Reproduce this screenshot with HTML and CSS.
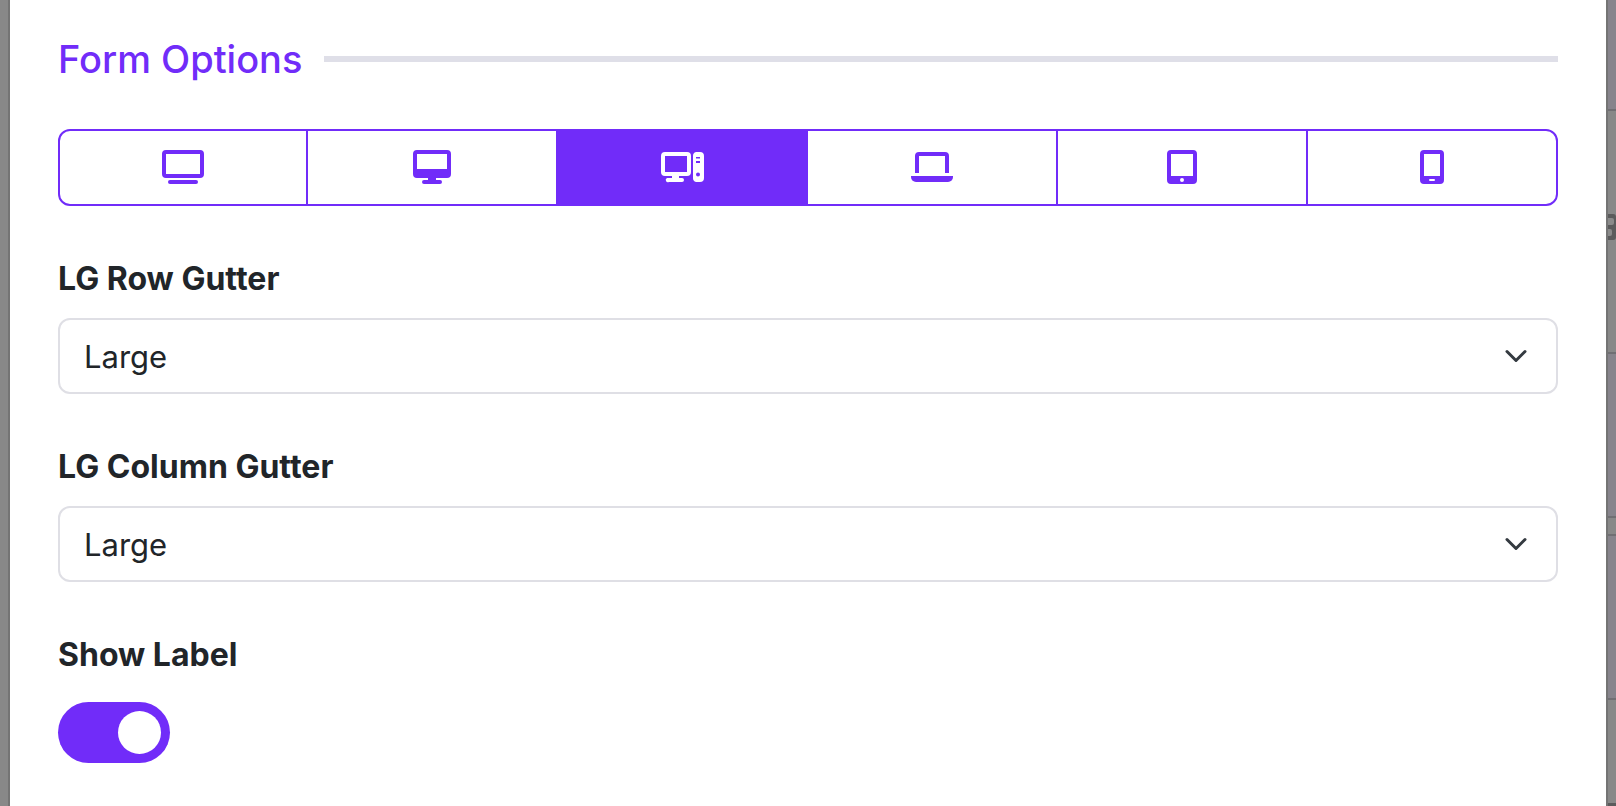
FILE: index.html
```
<!DOCTYPE html>
<html lang="en">
<head>
    <meta charset="utf-8">
    <meta name="viewport" content="width=device-width, initial-scale=1">
    <title>Form Options</title>
    <link rel="stylesheet" href="styles.css">
</head>
<body>
    <div class="page-left"></div>

    <main class="modal">
        <h2 class="section-title">Form Options</h2>

        <div class="btn-group" role="group" aria-label="Screen size">
            <button type="button" class="btn" aria-label="XXL">
                <svg class="icon" viewBox="0 0 48 41">
                    <rect x="5" y="5" width="38" height="24" rx="2" fill="none" stroke="currentColor" stroke-width="4"/>
                    <rect x="9" y="33" width="30" height="4" rx="2"/>
                </svg>
            </button>
            <button type="button" class="btn" aria-label="XL">
                <svg class="icon" viewBox="0 0 48 41">
                    <path fill-rule="evenodd" d="M9 3h30a4 4 0 0 1 4 4v20a4 4 0 0 1-4 4H28v2h4a2 2 0 0 1 0 4H16a2 2 0 0 1 0-4h4v-2H9a4 4 0 0 1-4-4V7a4 4 0 0 1 4-4zm0 4v15h30V7z"/>
                </svg>
            </button>
            <button type="button" class="btn active" aria-label="LG">
                <svg class="icon" viewBox="0 0 48 41">
                    <rect x="5" y="7" width="26" height="20" rx="2" fill="none" stroke="currentColor" stroke-width="4"/>
                    <path d="M14 28h7v3h3a2 2 0 0 1 0 4H11a2 2 0 0 1-2-4h5z"/>
                    <path fill-rule="evenodd" d="M38 5h4a4 4 0 0 1 4 4v22a4 4 0 0 1-4 4h-4a4 4 0 0 1-3-4V9a4 4 0 0 1 3-4zm0 5v1.500h4V10zm0 4v2h4v-2zm2 11.500a2 2 0 1 0 0 4 2 2 0 0 0 0-4z"/>
                </svg>
            </button>
            <button type="button" class="btn" aria-label="MD">
                <svg class="icon" viewBox="0 0 48 41">
                    <path d="M9 26V9a2 2 0 0 1 2-2h26a2 2 0 0 1 2 2v17" fill="none" stroke="currentColor" stroke-width="4"/>
                    <path d="M3 29h42v1a5 5 0 0 1-5 5H8a5 5 0 0 1-5-5z"/>
                </svg>
            </button>
            <button type="button" class="btn" aria-label="SM">
                <svg class="icon" viewBox="0 0 48 41">
                    <path fill-rule="evenodd" d="M13 3h22a4 4 0 0 1 4 4v26a4 4 0 0 1-4 4H13a4 4 0 0 1-4-4V7a4 4 0 0 1 4-4zm0 4v22h22V7zm11 24a2 2 0 1 0 0 4 2 2 0 0 0 0-4z"/>
                </svg>
            </button>
            <button type="button" class="btn" aria-label="XS">
                <svg class="icon" viewBox="0 0 48 41">
                    <path fill-rule="evenodd" d="M16 3h16a4 4 0 0 1 4 4v26a4 4 0 0 1-4 4H16a4 4 0 0 1-4-4V7a4 4 0 0 1 4-4zm0 4v22h16V7zm6 25a1 1 0 0 0 0 2h4a1 1 0 0 0 0-2z"/>
                </svg>
            </button>
        </div>

        <div class="field">
            <label for="row-gutter">LG Row Gutter</label>
            <select id="row-gutter" class="select">
                <option>None</option>
                <option>Small</option>
                <option>Medium</option>
                <option selected>Large</option>
            </select>
        </div>

        <div class="field">
            <label for="column-gutter">LG Column Gutter</label>
            <select id="column-gutter" class="select">
                <option>None</option>
                <option>Small</option>
                <option>Medium</option>
                <option selected>Large</option>
            </select>
        </div>

        <div class="field">
            <label for="show-label">Show Label</label>
            <input id="show-label" class="switch" type="checkbox" role="switch" checked>
        </div>
    </main>

    <!-- page behind the modal -->
    <div class="page-right">
        <div class="block head"></div>
        <div class="block body">
            <svg class="grid-icon" viewBox="0 0 8 26">
                <rect width="12" height="26" x="-4" rx="3" fill="#5b5b5c"/>
                <rect width="8" height="7" x="-2" y="4" rx="2" fill="#8a8a8a"/>
                <rect width="6" height="7" x="-2" y="15" rx="2" fill="#8a8a8a"/>
            </svg>
        </div>
        <div class="block panel"></div>
        <div class="block gap"></div>
        <div class="block panel"></div>
        <div class="block foot"></div>
    </div>
</body>
</html>
```
FILE: styles.css
```
* {
    box-sizing: border-box;
}
body {
    margin: 0;
    min-height: 100vh;
    display: flex;
    background-color: #888888;
    color: #212529;
    font-family: Inter, "Liberation Sans", sans-serif;
    font-size: 32px;
    line-height: 48px;
}
.page-left {
    width: 8px;
}
.modal {
    flex: 1;
    padding: 35px 48px 0;
    background-color: white;
    border: solid #747474;
    border-width: 0 2px;
}
.section-title {
    display: flex;
    align-items: center;
    gap: 22px;
    margin: 0 0 46px;
    color: #712cf9;
    font-size: 38px;
    font-weight: 500;
    line-height: 48px;
}
.section-title::after {
    content: "";
    flex: 1;
    height: 6px;
    background-color: #dfdfe8;
}
.btn-group {
    display: grid;
    grid-template-columns: repeat(6, 1fr);
    margin-bottom: 49px;
}
.btn {
    display: flex;
    justify-content: center;
    padding: 16px 0;
    background-color: transparent;
    border: 2px solid #712cf9;
    color: #712cf9;
    cursor: pointer;
}
.btn + .btn {
    margin-left: -2px;
}
.btn:first-child {
    border-radius: 12px 0 0 12px;
}
.btn:last-child {
    border-radius: 0 12px 12px 0;
}
.btn.active {
    background-color: #712cf9;
    color: white;
}
.icon {
    width: 48px;
    height: 41px;
    fill: currentColor;
}
.field {
    margin-bottom: 49px;
}
.field label {
    display: block;
    margin-bottom: 15px;
    font-weight: 700;
}
.select {
    display: block;
    width: 100%;
    height: 76px;
    padding: 2px 72px 0 24px;
    appearance: none;
    background: white url("data:image/svg+xml,%3Csvg xmlns='http://www.w3.org/2000/svg' viewBox='0 0 16 16'%3E%3Cpath fill='none' stroke='%23343a40' stroke-linecap='round' stroke-linejoin='round' stroke-width='2' d='m2 5 6 6 6-6'/%3E%3C/svg%3E") no-repeat right 28px center / 24px;
    border: 2px solid #dfdfe5;
    border-radius: 12px;
    color: inherit;
    font: inherit;
    font-size: 31px;
}
.switch {
    display: block;
    width: 112px;
    height: 61px;
    margin: 23px 0 0;
    padding: 9px;
    appearance: none;
    background-color: #712cf9;
    border-radius: 31px;
    cursor: pointer;
}
.switch::before {
    content: "";
    display: block;
    width: 43px;
    height: 43px;
    border-radius: 50%;
    background-color: white;
}
.switch:checked::before {
    margin-left: auto;
}
.page-right {
    width: 8px;
    display: flex;
    flex-direction: column;
}
.block {
    border-bottom: 2px solid #706f73;
}
.head {
    height: 111px;
    background-color: #87848c;
}
.body {
    height: 243px;
    padding-top: 103px;
}
.panel {
    height: 164px;
    background-color: #87848c;
}
.gap {
    height: 18px;
}
.foot {
    height: 106px;
    border-bottom: 3px solid #5b5b5c;
}
.grid-icon {
    display: block;
    width: 8px;
    height: 26px;
}
```
